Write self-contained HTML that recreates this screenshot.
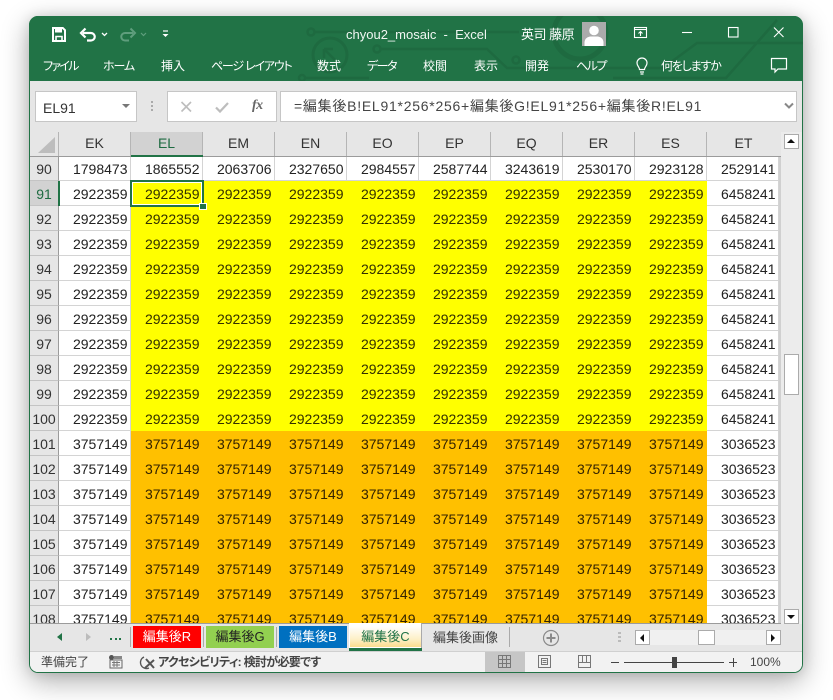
<!DOCTYPE html>
<html><head><meta charset="utf-8">
<style>
*{box-sizing:border-box}
html,body{margin:0;padding:0;width:833px;height:700px;overflow:hidden;background:#fff}
body{font-family:"Liberation Sans","Noto Sans CJK JP",sans-serif;color:#222;position:relative}
.a{position:absolute;white-space:nowrap}
#win{position:absolute;left:29px;top:16px;width:774px;height:657px;border-radius:9px;box-shadow:0 8px 28px rgba(0,0,0,.33),0 0 12px rgba(0,0,0,.1)}
#frame{position:absolute;left:29px;top:16px;width:774px;height:657px;border-radius:9px;background:#e6e6e6;overflow:hidden;border:1px solid #217346}
#head{position:absolute;left:29px;top:16px;width:774px;height:65px;background:#217346;border-radius:9px 9px 0 0;overflow:hidden}
.w{color:#fff;font-size:12px;line-height:16px}
.rb{top:58px;font-feature-settings:"palt"}
.box{background:#fff;border:1px solid #c6c6c6}
table{border-collapse:separate;border-spacing:0;table-layout:fixed;width:749px;font-size:14px;color:#222}
td{height:25px;padding:2px 2.5px 0 0;text-align:right;border-right:1px solid #d4d4d4;border-bottom:1px solid #d4d4d4;background:#fff;line-height:21px;overflow:hidden}
tr:first-child td{height:24px;padding-top:1px}
td.h{text-align:center;background:#e6e6e6;border-right:1px solid #9b9b9b;border-bottom:1px solid #c4c4c4;padding-right:0;color:#333}
td.y{background:#ff0;border-color:#ff0;color:#333000}
td.o{background:#ffc000;border-color:#ffc000;color:#332200}
.ch{position:absolute;top:132px;height:25px;width:72px;text-align:center;font-size:14px;line-height:23px;color:#333;border-right:1px solid #b5b5b5;background:#e6e6e6}
.tab{position:absolute;top:626px;height:22px;width:68px;text-align:center;font-size:13px;line-height:21px}
.btn{position:absolute;background:#fff;border:1px solid #ababab}
</style></head><body>
<div id="win"></div>
<div id="frame"></div>
<div id="head">
<svg width="774" height="65" style="position:absolute;left:0;top:0" fill="none" stroke="#1e6a40" stroke-width="2.500">
<circle cx="282" cy="16" r="3.500"/><path d="M286 16H490"/>
<circle cx="301" cy="39" r="17" stroke-width="3"/><path d="M295 33l11 11M295 33h9M295 33v9"/>
<circle cx="348" cy="33" r="3.500"/><path d="M352 33H458L478 52H634L668 27H774"/>
<circle cx="273" cy="62" r="3"/><path d="M277 62H340"/>
<circle cx="551" cy="17" r="26" stroke-width="5"/>
<circle cx="487" cy="44" r="3.500"/>
<path d="M584 62H697L748 4"/>
</svg>
</div>
<!-- QAT -->
<svg class="a" style="left:50px;top:24px" width="130" height="22" fill="none" stroke="#fff">
<path d="M3 4H12.800L15 6.200V17H3Z" stroke-width="2"/><path d="M5 4.500H12V8.500H5Z" fill="#fff" stroke="none"/><path d="M6 17V12.500H12V17" stroke-width="1.600"/>
<path d="M33 9H41a3.700 3.700 0 0 1 0 7.500H37" stroke-width="2.200"/><path d="M35.500 4.500L31 9L35.500 13.500" stroke-width="2.200"/><path d="M52 9l2.500 2.500L57 9" stroke-width="1.300"/>
<g stroke="#5f9e7d"><path d="M83 9H75a3.700 3.700 0 0 0 0 7.500H79" stroke-width="2"/><path d="M80.500 4.500L85 9L80.500 13.500" stroke-width="2"/><path d="M91 9l2.500 2.500L96 9" stroke-width="1.200"/></g>
<path d="M113 7H118" stroke-width="1.200"/><path d="M112.500 10H118.500L115.500 13Z" fill="#fff" stroke="none"/>
</svg>
<div class="a w" style="left:346px;top:27px;font-size:13px;color:#f0f6f2">chyou2_mosaic&nbsp; -&nbsp; Excel</div>
<div class="a w" style="left:521px;top:27px;font-size:13px;letter-spacing:-.5px">英司 藤原</div>
<svg class="a" style="left:582px;top:22px" width="24" height="24"><rect width="24" height="24" fill="#ababab"/><circle cx="12" cy="8.500" r="4.800" fill="#fff"/><path d="M2.500 24V20Q3 15.500 8 14.500H16Q21 15.500 21.500 20V24Z" fill="#fff"/></svg>
<!-- window controls -->
<svg class="a" style="left:630px;top:22px" width="165" height="24" fill="none" stroke="#fff" stroke-width="1.100">
<rect x="4.500" y="5.500" width="12" height="10"/><path d="M4.500 7.500H16.500"/><path d="M10.500 14V9.500M8.500 11.500L10.500 9.500L12.500 11.500"/>
<path d="M52 10.500H62"/>
</svg>
<svg class="a" style="left:725px;top:24px" width="70" height="18" fill="none" stroke="#fff" stroke-width="1.100">
<rect x="3.500" y="3.500" width="9.500" height="9.500"/><path d="M49 3.500L58.500 13M58.500 3.500L49 13"/>
</svg>
<!-- ribbon -->
<div class="a w rb" style="left:43px;letter-spacing:-1.700px">ファイル</div>
<div class="a w rb" style="left:103px;letter-spacing:-1.100px">ホーム</div>
<div class="a w rb" style="left:161px">挿入</div>
<div class="a w rb" style="left:211px;letter-spacing:-1.200px">ページ レイアウト</div>
<div class="a w rb" style="left:317px">数式</div>
<div class="a w rb" style="left:367px;letter-spacing:-1.500px">データ</div>
<div class="a w rb" style="left:423px">校閲</div>
<div class="a w rb" style="left:474px">表示</div>
<div class="a w rb" style="left:525px">開発</div>
<div class="a w rb" style="left:576px;letter-spacing:-1.500px">ヘルプ</div>
<div class="a w rb" style="left:661px;letter-spacing:-1.200px">何をしますか</div>
<svg class="a" style="left:634px;top:56px" width="16" height="20" fill="none" stroke="#fff" stroke-width="1.200"><path d="M5.500 13.500C5.500 11 3 10 3 7A5 5 0 0 1 13 7C13 10 10.500 11 10.500 13.500Z"/><path d="M6 16H10M6.500 18H9.500"/></svg>
<svg class="a" style="left:770px;top:56px" width="18" height="18" fill="none" stroke="#fff" stroke-width="1.200"><path d="M1.500 2.500H16.500V13H8L5 16V13H1.500Z"/></svg>
<!-- formula bar -->
<div class="a box" style="left:35px;top:91px;width:102px;height:31px;font-size:14px;line-height:32px;padding-left:7px;color:#333">EL91</div>
<div class="a" style="left:122px;top:104px;border:4px solid transparent;border-top:4px solid #777"></div>
<div class="a" style="left:151px;top:101px;width:2px;height:2px;background:#aaa;box-shadow:0 4px 0 #aaa,0 8px 0 #aaa"></div>
<div class="a box" style="left:167px;top:91px;width:110px;height:31px"></div>
<svg class="a" style="left:178px;top:98px" width="100" height="18" fill="none" stroke-width="1.600"><path d="M3.500 4L13 13.500M13 4L3.500 13.500" stroke="#bdbdbd"/><path d="M38 9.500L42 13.500L50 5" stroke="#bdbdbd" stroke-width="2.200"/></svg>
<div class="a" style="left:252px;top:98px;font:italic bold 14px 'Liberation Serif',serif;color:#666;letter-spacing:-.5px">fx</div>
<div class="a box" style="left:280px;top:91px;width:517px;height:31px;font-size:14px;line-height:29px;padding-left:13px;color:#444;letter-spacing:.74px;overflow:hidden">=編集後B!EL91*256*256+編集後G!EL91*256+編集後R!EL91</div>
<svg class="a" style="left:783px;top:101px" width="12" height="10" fill="none" stroke="#888" stroke-width="2"><path d="M2 2.500L6 6.500L10 2.500"/></svg>
<!-- sheet -->
<div class="a" style="left:30px;top:132px;width:29px;height:25px;background:#e6e6e6;border-right:1px solid #b5b5b5"></div>
<div class="a" style="left:38px;top:137px;width:0;height:0;border-style:solid;border-width:0 0 16px 17px;border-color:transparent transparent #bdbdbd transparent"></div>
<div class="ch" style="left:59px">EK</div>
<div class="ch" style="left:131px;background:#d2d2d2;color:#1e6b41;border-bottom:2px solid #217346">EL</div>
<div class="ch" style="left:203px">EM</div>
<div class="ch" style="left:275px">EN</div>
<div class="ch" style="left:347px">EO</div>
<div class="ch" style="left:419px">EP</div>
<div class="ch" style="left:491px">EQ</div>
<div class="ch" style="left:563px">ER</div>
<div class="ch" style="left:635px">ES</div>
<div class="ch" style="left:707px;width:73px;border-right:0">ET</div>
<div class="a" style="left:30px;top:156px;width:751px;height:1px;background:#9b9b9b"></div>
<div class="a" style="left:131px;top:155px;width:72px;height:2px;background:#217346"></div>
<div class="a" style="left:30px;top:157px;width:749px;height:467px;overflow:hidden;background:#fff">
<table><colgroup><col style="width:29px"><col style="width:72px"><col style="width:72px"><col style="width:72px"><col style="width:72px"><col style="width:72px"><col style="width:72px"><col style="width:72px"><col style="width:72px"><col style="width:72px"><col style="width:72px"></colgroup>
<tr><td class="h">90</td><td>1798473</td><td>1865552</td><td>2063706</td><td>2327650</td><td>2984557</td><td>2587744</td><td>3243619</td><td>2530170</td><td>2923128</td><td>2529141</td></tr>
<tr><td class="h" style="background:#d2d2d2;color:#1e6b41">91</td><td>2922359</td><td class="y">2922359</td><td class="y">2922359</td><td class="y">2922359</td><td class="y">2922359</td><td class="y">2922359</td><td class="y">2922359</td><td class="y">2922359</td><td class="y">2922359</td><td>6458241</td></tr>
<tr><td class="h">92</td><td>2922359</td><td class="y">2922359</td><td class="y">2922359</td><td class="y">2922359</td><td class="y">2922359</td><td class="y">2922359</td><td class="y">2922359</td><td class="y">2922359</td><td class="y">2922359</td><td>6458241</td></tr>
<tr><td class="h">93</td><td>2922359</td><td class="y">2922359</td><td class="y">2922359</td><td class="y">2922359</td><td class="y">2922359</td><td class="y">2922359</td><td class="y">2922359</td><td class="y">2922359</td><td class="y">2922359</td><td>6458241</td></tr>
<tr><td class="h">94</td><td>2922359</td><td class="y">2922359</td><td class="y">2922359</td><td class="y">2922359</td><td class="y">2922359</td><td class="y">2922359</td><td class="y">2922359</td><td class="y">2922359</td><td class="y">2922359</td><td>6458241</td></tr>
<tr><td class="h">95</td><td>2922359</td><td class="y">2922359</td><td class="y">2922359</td><td class="y">2922359</td><td class="y">2922359</td><td class="y">2922359</td><td class="y">2922359</td><td class="y">2922359</td><td class="y">2922359</td><td>6458241</td></tr>
<tr><td class="h">96</td><td>2922359</td><td class="y">2922359</td><td class="y">2922359</td><td class="y">2922359</td><td class="y">2922359</td><td class="y">2922359</td><td class="y">2922359</td><td class="y">2922359</td><td class="y">2922359</td><td>6458241</td></tr>
<tr><td class="h">97</td><td>2922359</td><td class="y">2922359</td><td class="y">2922359</td><td class="y">2922359</td><td class="y">2922359</td><td class="y">2922359</td><td class="y">2922359</td><td class="y">2922359</td><td class="y">2922359</td><td>6458241</td></tr>
<tr><td class="h">98</td><td>2922359</td><td class="y">2922359</td><td class="y">2922359</td><td class="y">2922359</td><td class="y">2922359</td><td class="y">2922359</td><td class="y">2922359</td><td class="y">2922359</td><td class="y">2922359</td><td>6458241</td></tr>
<tr><td class="h">99</td><td>2922359</td><td class="y">2922359</td><td class="y">2922359</td><td class="y">2922359</td><td class="y">2922359</td><td class="y">2922359</td><td class="y">2922359</td><td class="y">2922359</td><td class="y">2922359</td><td>6458241</td></tr>
<tr><td class="h">100</td><td>2922359</td><td class="y">2922359</td><td class="y">2922359</td><td class="y">2922359</td><td class="y">2922359</td><td class="y">2922359</td><td class="y">2922359</td><td class="y">2922359</td><td class="y">2922359</td><td>6458241</td></tr>
<tr><td class="h">101</td><td>3757149</td><td class="o">3757149</td><td class="o">3757149</td><td class="o">3757149</td><td class="o">3757149</td><td class="o">3757149</td><td class="o">3757149</td><td class="o">3757149</td><td class="o">3757149</td><td>3036523</td></tr>
<tr><td class="h">102</td><td>3757149</td><td class="o">3757149</td><td class="o">3757149</td><td class="o">3757149</td><td class="o">3757149</td><td class="o">3757149</td><td class="o">3757149</td><td class="o">3757149</td><td class="o">3757149</td><td>3036523</td></tr>
<tr><td class="h">103</td><td>3757149</td><td class="o">3757149</td><td class="o">3757149</td><td class="o">3757149</td><td class="o">3757149</td><td class="o">3757149</td><td class="o">3757149</td><td class="o">3757149</td><td class="o">3757149</td><td>3036523</td></tr>
<tr><td class="h">104</td><td>3757149</td><td class="o">3757149</td><td class="o">3757149</td><td class="o">3757149</td><td class="o">3757149</td><td class="o">3757149</td><td class="o">3757149</td><td class="o">3757149</td><td class="o">3757149</td><td>3036523</td></tr>
<tr><td class="h">105</td><td>3757149</td><td class="o">3757149</td><td class="o">3757149</td><td class="o">3757149</td><td class="o">3757149</td><td class="o">3757149</td><td class="o">3757149</td><td class="o">3757149</td><td class="o">3757149</td><td>3036523</td></tr>
<tr><td class="h">106</td><td>3757149</td><td class="o">3757149</td><td class="o">3757149</td><td class="o">3757149</td><td class="o">3757149</td><td class="o">3757149</td><td class="o">3757149</td><td class="o">3757149</td><td class="o">3757149</td><td>3036523</td></tr>
<tr><td class="h">107</td><td>3757149</td><td class="o">3757149</td><td class="o">3757149</td><td class="o">3757149</td><td class="o">3757149</td><td class="o">3757149</td><td class="o">3757149</td><td class="o">3757149</td><td class="o">3757149</td><td>3036523</td></tr>
<tr><td class="h">108</td><td>3757149</td><td class="o">3757149</td><td class="o">3757149</td><td class="o">3757149</td><td class="o">3757149</td><td class="o">3757149</td><td class="o">3757149</td><td class="o">3757149</td><td class="o">3757149</td><td>3036523</td></tr>
</table></div>
<div class="a" style="left:779px;top:157px;width:2px;height:467px;background:#d0d0d0"></div>
<!-- selection -->
<div class="a" style="left:130px;top:180px;width:74px;height:27px;border:2px solid #217346;outline:1px solid #fff;outline-offset:-3px"></div>
<div class="a" style="left:200px;top:204px;width:6px;height:5px;background:#217346;outline:1px solid #fff"></div>
<div class="a" style="left:58px;top:181px;width:1.500px;height:25px;background:#217346"></div>
<!-- v scrollbar -->
<div class="a" style="left:781px;top:132px;width:21px;height:492px;background:#ececec"></div>
<div class="btn" style="left:784px;top:134px;width:15px;height:15px"></div>
<div class="a" style="left:787px;top:139px;border:4px solid transparent;border-bottom:4px solid #111;border-top:0"></div>
<div class="btn" style="left:784px;top:609px;width:15px;height:15px"></div>
<div class="a" style="left:787px;top:615px;border:4px solid transparent;border-top:4px solid #111;border-bottom:0"></div>
<div class="btn" style="left:784px;top:354px;width:15px;height:41px"></div>
<!-- tab bar -->
<div class="a" style="left:30px;top:624px;width:772px;height:27px;background:#e6e6e6"></div>
<div class="a" style="left:30px;top:623px;width:751px;height:1px;background:#9b9b9b"></div>
<div class="a" style="left:57px;top:633px;border:4px solid transparent;border-right:5px solid #217346;border-left:0"></div>
<div class="a" style="left:86px;top:633px;border:4px solid transparent;border-left:5px solid #bcbcbc;border-right:0"></div>
<div class="a" style="left:110px;top:638px;width:2px;height:2px;background:#217346;box-shadow:5px 0 0 #217346,9px 0 0 #217346"></div>
<div class="a" style="left:130px;top:627px;width:1px;height:20px;background:#aaa"></div>
<div class="tab" style="left:133px;background:#f00;color:#fff">編集後R</div>
<div class="a" style="left:203px;top:627px;width:1px;height:20px;background:#aaa"></div>
<div class="tab" style="left:206px;background:#92d050;color:#222">編集後G</div>
<div class="a" style="left:276px;top:627px;width:1px;height:20px;background:#aaa"></div>
<div class="tab" style="left:279px;background:#0070c0;color:#fff">編集後B</div>
<div class="a" style="left:349px;top:623px;width:73px;height:25px;background:#fff;border-right:1px solid #aaa"></div>
<div class="tab" style="left:350px;top:624px;width:71px;height:23px;background:linear-gradient(#fff 10%,#fdf0c8 65%,#fbdc8e);color:#217346;line-height:26px">編集後C</div>
<div class="a" style="left:349px;top:648px;width:73px;height:3px;background:#217346"></div>
<div class="a" style="left:433px;top:627px;font-size:13px;line-height:22px;color:#444">編集後画像</div>
<div class="a" style="left:509px;top:627px;width:1px;height:20px;background:#aaa"></div>
<svg class="a" style="left:542px;top:629px" width="18" height="18" fill="none" stroke="#8a8a8a"><circle cx="9" cy="9" r="7.500" stroke-width="1.200"/><path d="M9 4.500V13.500M4.500 9H13.500" stroke-width="2"/></svg>
<div class="a" style="left:618px;top:632px;width:3px;height:2px;background:#bbb;box-shadow:0 4px 0 #bbb,0 8px 0 #bbb"></div>
<div class="a" style="left:636px;top:630px;width:144px;height:15px;background:#f0f0f0"></div>
<div class="btn" style="left:635px;top:630px;width:15px;height:15px"></div>
<div class="a" style="left:640px;top:634px;border:4px solid transparent;border-right:4px solid #111;border-left:0"></div>
<div class="btn" style="left:698px;top:630px;width:17px;height:15px"></div>
<div class="btn" style="left:766px;top:630px;width:15px;height:15px"></div>
<div class="a" style="left:771px;top:634px;border:4px solid transparent;border-left:4px solid #111;border-right:0"></div>
<!-- status bar -->
<div class="a" style="left:30px;top:651px;width:772px;height:21px;background:#f2f2f2;border-top:1px solid #d0d0d0;border-radius:0 0 8px 8px"></div>
<div class="a" style="left:41px;top:654px;font-size:12px;line-height:17px;color:#444">準備完了</div>
<svg class="a" style="left:109px;top:655px" width="14" height="14"><rect x="0" y="0" width="5" height="5" rx="2.500" fill="#555"/><rect x="5" y="1" width="8" height="3" fill="#888"/><rect x="1" y="5" width="12" height="8" fill="none" stroke="#666"/><path d="M3 7.500h8M3 10h8M5 6v6M8 6v6" stroke="#777"/></svg>
<svg class="a" style="left:139px;top:654px" width="18" height="18" fill="none" stroke="#555" stroke-width="1.300"><path d="M5 3A6 6 0 1 0 10 14"/><path d="M7 5L15 14M15 6L6 14" stroke-width="2"/></svg>
<div class="a" style="left:158px;top:654px;font-size:12px;line-height:17px;font-weight:bold;color:#444;font-feature-settings:'palt';letter-spacing:-.7px">アクセシビリティ: 検討が必要です</div>
<div class="a" style="left:485px;top:652px;width:40px;height:20px;background:#c6c6c6"></div>
<svg class="a" style="left:497px;top:654px" width="300" height="17" fill="none" stroke="#777">
<path d="M1.500 1.500H13.500V13.500H1.500ZM5.500 1.500V13.500M9.500 1.500V13.500M1.500 5.500H13.500M1.500 9.500H13.500"/>
<path d="M41.500 1.500H53.500V13.500H41.500ZM44.500 4.500H50.500V10.500H44.500ZM45.500 6.500H49.500M45.500 8.500H49.500"/>
<path d="M81.500 1.500H93.500V13.500H81.500ZM85.500 1.500V8.500H89.500V1.500M81.500 8.500H85.500M89.500 8.500H93.500" stroke-width="1"/>
</svg>
<div class="a" style="left:611px;top:662px;width:8px;height:1px;background:#444"></div>
<div class="a" style="left:624px;top:662px;width:100px;height:1px;background:#444"></div>
<div class="a" style="left:672px;top:657px;width:5px;height:11px;background:#444"></div>
<div class="a" style="left:729px;top:662px;width:8px;height:1px;background:#444"></div>
<div class="a" style="left:733px;top:658px;width:1px;height:9px;background:#444"></div>
<div class="a" style="left:750px;top:654px;font-size:12px;line-height:17px;color:#444">100%</div>
</body></html>
